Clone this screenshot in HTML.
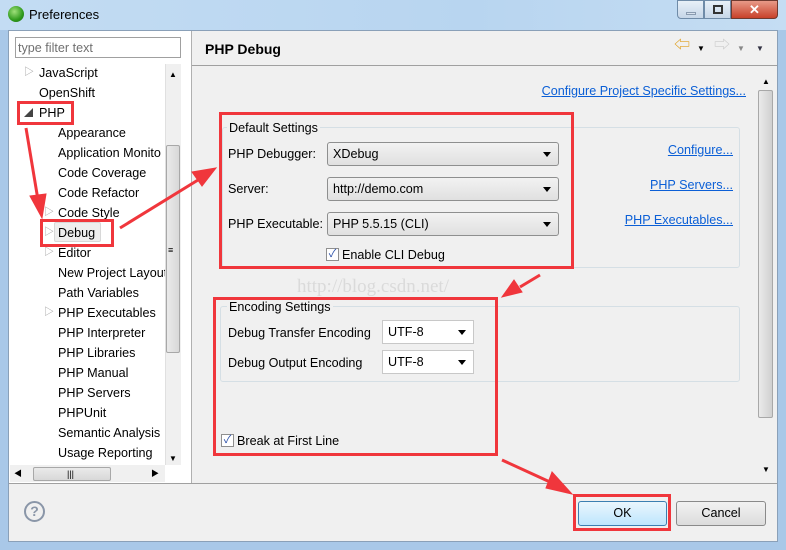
<!DOCTYPE html>
<html><head><meta charset="utf-8"><style>
*{margin:0;padding:0;box-sizing:border-box}
body{width:786px;height:550px;position:relative;overflow:hidden;background:#a9c8e8;font-family:"Liberation Sans","Noto Sans CJK SC",sans-serif;font-size:12.6px;color:#000}
.a{position:absolute}
.t{position:absolute;white-space:nowrap;line-height:16px}
.r{position:absolute;white-space:nowrap;line-height:16px;text-align:right}
.red{position:absolute;border:3px solid #f0363c}
.combo{position:absolute;border:1px solid #8e8f8f;border-radius:3px;background:linear-gradient(#f2f2f2,#e0e0e0);padding-left:5px;line-height:22px}
.combo.w{background:#fff;border-color:#c8c8c8;border-radius:0}
.combo:after{content:"";position:absolute;right:7px;top:9px;border-left:4px solid transparent;border-right:4px solid transparent;border-top:5px solid #000}
.cb{position:absolute;width:13px;height:13px;border:1px solid #8f8f8f;background:#fff;font-size:11px;line-height:11px;text-align:center;color:#2a4fa8}
.link{color:#0b5fd6;text-decoration:underline}
.grp{position:absolute;border:1px solid #d5dfe5;border-radius:3px}
</style></head><body>
<div class="a" style="left:0;top:0;width:786px;height:30px;background:linear-gradient(90deg,#c3dcf3,#b8d5f0 60%,#c5ddf3)"></div>
<div class="a" style="left:8px;top:6px;width:16px;height:16px;border-radius:50%;background:radial-gradient(circle at 40% 35%,#9fe07a,#2f9a1c 60%,#1a6a10)"></div>
<div class="t" style="left:29px;top:7px;font-size:13px">Preferences</div>
<div class="a" style="left:677px;top:0;width:27px;height:19px;border:1px solid #6f8ba8;border-radius:0 0 0 4px;background:linear-gradient(#e8f0f8,#c6d6e8)"><div class="a" style="left:8px;top:11px;width:10px;height:3px;background:#d8e2ee;border:1px solid #8a9bb0"></div></div>
<div class="a" style="left:704px;top:0;width:27px;height:19px;border:1px solid #6f8ba8;background:linear-gradient(#e8f0f8,#c6d6e8)"><div class="a" style="left:8px;top:4px;width:10px;height:9px;border:2px solid #333"></div></div>
<div class="a" style="left:731px;top:0;width:47px;height:19px;border:1px solid #6f3a30;border-radius:0 0 4px 0;background:linear-gradient(#e89a88,#c8412a);color:#fff;text-align:center;font-weight:bold;font-size:13px;line-height:17px">✕</div>
<div class="a" style="left:8px;top:30px;width:770px;height:512px;background:#f0f0f0;border:1px solid #8aa0b8"></div>
<div class="a" style="left:9px;top:31px;width:182px;height:452px;background:#fff"></div>
<div class="a" style="left:15px;top:37px;width:166px;height:21px;border:1px solid #a0a0a0;background:#fff"></div>
<div class="t" style="left:18px;top:40px;color:#707070">type filter text</div>
<div class="a" style="left:165px;top:64px;width:16px;height:401px;background:#f0f0f0;border-left:1px solid #e0e0e0"></div>
<div class="a" style="left:166px;top:145px;width:14px;height:208px;background:linear-gradient(90deg,#eaeaea,#d8d8d8);border:1px solid #a8a8a8;border-radius:2px"></div>
<div class="t" style="left:168px;top:242px;font-size:9px">≡</div>
<div class="t" style="left:169px;top:67px;font-size:8px">▲</div>
<div class="t" style="left:169px;top:451px;font-size:8px">▼</div>
<div class="a" style="left:10px;top:465px;width:155px;height:17px;background:#f0f0f0"></div>
<div class="a" style="left:33px;top:467px;width:78px;height:14px;background:linear-gradient(#eaeaea,#d8d8d8);border:1px solid #a8a8a8;border-radius:2px"></div>
<div class="t" style="left:67px;top:466px;font-size:9px">|||</div>
<div class="t" style="left:14px;top:466px;font-size:8px">◀</div>
<div class="t" style="left:151px;top:466px;font-size:8px">▶</div>
<div class="a" style="left:191px;top:31px;width:1px;height:452px;background:#b0b0b0"></div>
<div class="t" style="left:24px;top:65px;color:#999;font-size:10px">▷</div>
<div class="t" style="left:39px;top:65px">JavaScript</div>
<div class="t" style="left:39px;top:85px">OpenShift</div>
<div class="t" style="left:24px;top:105px;color:#444;font-size:9px">◢</div>
<div class="t" style="left:39px;top:105px">PHP</div>
<div class="t" style="left:58px;top:125px">Appearance</div>
<div class="t" style="left:58px;top:145px">Application Monito</div>
<div class="t" style="left:58px;top:165px">Code Coverage</div>
<div class="t" style="left:58px;top:185px">Code Refactor</div>
<div class="t" style="left:44px;top:205px;color:#999;font-size:10px">▷</div>
<div class="t" style="left:58px;top:205px">Code Style</div>
<div class="t" style="left:44px;top:225px;color:#999;font-size:10px">▷</div>
<div class="a" style="left:54px;top:222px;width:47px;height:20px;background:#eeeeee;border:1px solid #d8d8d8;border-radius:2px"></div>
<div class="t" style="left:58px;top:225px">Debug</div>
<div class="t" style="left:44px;top:245px;color:#999;font-size:10px">▷</div>
<div class="t" style="left:58px;top:245px">Editor</div>
<div class="a" style="left:58px;top:262px;width:107px;height:20px;overflow:hidden"><div class="t" style="left:0;top:3px">New Project Layout</div></div>
<div class="t" style="left:58px;top:285px">Path Variables</div>
<div class="t" style="left:44px;top:305px;color:#999;font-size:10px">▷</div>
<div class="t" style="left:58px;top:305px">PHP Executables</div>
<div class="t" style="left:58px;top:325px">PHP Interpreter</div>
<div class="t" style="left:58px;top:345px">PHP Libraries</div>
<div class="t" style="left:58px;top:365px">PHP Manual</div>
<div class="t" style="left:58px;top:385px">PHP Servers</div>
<div class="t" style="left:58px;top:405px">PHPUnit</div>
<div class="t" style="left:58px;top:425px">Semantic Analysis</div>
<div class="t" style="left:58px;top:445px">Usage Reporting</div>
<div class="t" style="left:205px;top:41px;font-weight:bold;font-size:14px">PHP Debug</div>
<div class="a" style="left:192px;top:65px;width:585px;height:1px;background:#a0a0a0"></div>
<div class="t" style="left:674px;top:38px;color:#e0a020;font-size:16px">⇦</div>
<div class="t" style="left:697px;top:41px;font-size:8px">▼</div>
<div class="t" style="left:714px;top:38px;color:#ccc;font-size:16px">⇨</div>
<div class="t" style="left:737px;top:41px;font-size:8px;color:#888">▼</div>
<div class="t" style="left:756px;top:41px;font-size:8px;color:#334">▼</div>
<div class="a" style="left:758px;top:72px;width:15px;height:404px;background:#f0f0f0"></div>
<div class="a" style="left:758px;top:90px;width:15px;height:328px;background:linear-gradient(90deg,#eaeaea,#d0d0d0);border:1px solid #a8a8a8;border-radius:2px"></div>
<div class="t" style="left:762px;top:74px;font-size:8px">▲</div>
<div class="t" style="left:762px;top:462px;font-size:8px">▼</div>
<div class="r link" style="right:40px;top:83px">Configure Project Specific Settings...</div>
<div class="grp" style="left:222px;top:127px;width:518px;height:141px"></div>
<div class="t" style="left:227px;top:120px;background:#f0f0f0;padding:0 2px">Default Settings</div>
<div class="t" style="left:228px;top:146px">PHP Debugger:</div>
<div class="combo" style="left:327px;top:142px;width:232px;height:24px">XDebug</div>
<div class="t" style="left:228px;top:181px">Server:</div>
<div class="combo" style="left:327px;top:177px;width:232px;height:24px">http://demo.com</div>
<div class="t" style="left:228px;top:216px">PHP Executable:</div>
<div class="combo" style="left:327px;top:212px;width:232px;height:24px">PHP 5.5.15 (CLI)</div>
<div class="cb" style="left:326px;top:248px">✓</div>
<div class="t" style="left:342px;top:247px">Enable CLI Debug</div>
<div class="r link" style="right:53px;top:142px">Configure...</div>
<div class="r link" style="right:53px;top:177px">PHP Servers...</div>
<div class="r link" style="right:53px;top:212px">PHP Executables...</div>
<div class="t" style="left:297px;top:276px;font-family:'Liberation Serif',serif;font-size:19px;color:#dadada;line-height:22px">http://blog.csdn.net/</div>
<div class="grp" style="left:220px;top:306px;width:520px;height:76px"></div>
<div class="t" style="left:227px;top:299px;background:#f0f0f0;padding:0 2px">Encoding Settings</div>
<div class="t" style="left:228px;top:325px">Debug Transfer Encoding</div>
<div class="combo w" style="left:382px;top:320px;width:92px;height:24px">UTF-8</div>
<div class="t" style="left:228px;top:355px">Debug Output Encoding</div>
<div class="combo w" style="left:382px;top:350px;width:92px;height:24px">UTF-8</div>
<div class="cb" style="left:221px;top:434px">✓</div>
<div class="t" style="left:237px;top:433px">Break at First Line</div>
<div class="a" style="left:9px;top:483px;width:768px;height:1px;background:#a0a0a0"></div>
<div class="a" style="left:24px;top:501px;width:21px;height:21px;border:2px solid #8a96a8;border-radius:50%;text-align:center;font-weight:bold;color:#8a96a8;line-height:17px;font-size:14px">?</div>
<div class="a" style="left:578px;top:501px;width:89px;height:25px;border:1px solid #3c7fb1;border-radius:3px;background:linear-gradient(#eaf6fd,#bee6fd);text-align:center;line-height:23px">OK</div>
<div class="a" style="left:676px;top:501px;width:90px;height:25px;border:1px solid #8a8a8a;border-radius:3px;background:linear-gradient(#f2f2f2,#dcdcdc);text-align:center;line-height:23px">Cancel</div>
<div class="red" style="left:17px;top:101px;width:57px;height:24px"></div>
<div class="red" style="left:40px;top:219px;width:74px;height:28px"></div>
<div class="red" style="left:219px;top:112px;width:355px;height:157px"></div>
<div class="red" style="left:213px;top:297px;width:285px;height:159px"></div>
<div class="red" style="left:573px;top:494px;width:98px;height:37px"></div>
<svg class="a" style="left:0;top:0" width="786" height="550">
<g fill="#f0363c" stroke="#f0363c">
<line x1="26" y1="128" x2="38" y2="200" stroke-width="3"/><polygon points="30,196 46,194 42,218"/>
<line x1="120" y1="228" x2="198" y2="180" stroke-width="3"/><polygon points="192,172 202,186 216,168"/>
<line x1="540" y1="275" x2="520" y2="287" stroke-width="3"/><polygon points="514,280 522,292 502,297"/>
<line x1="502" y1="460" x2="550" y2="482" stroke-width="3"/><polygon points="552,472 546,488 572,494"/>
</g></svg>
</body></html>
